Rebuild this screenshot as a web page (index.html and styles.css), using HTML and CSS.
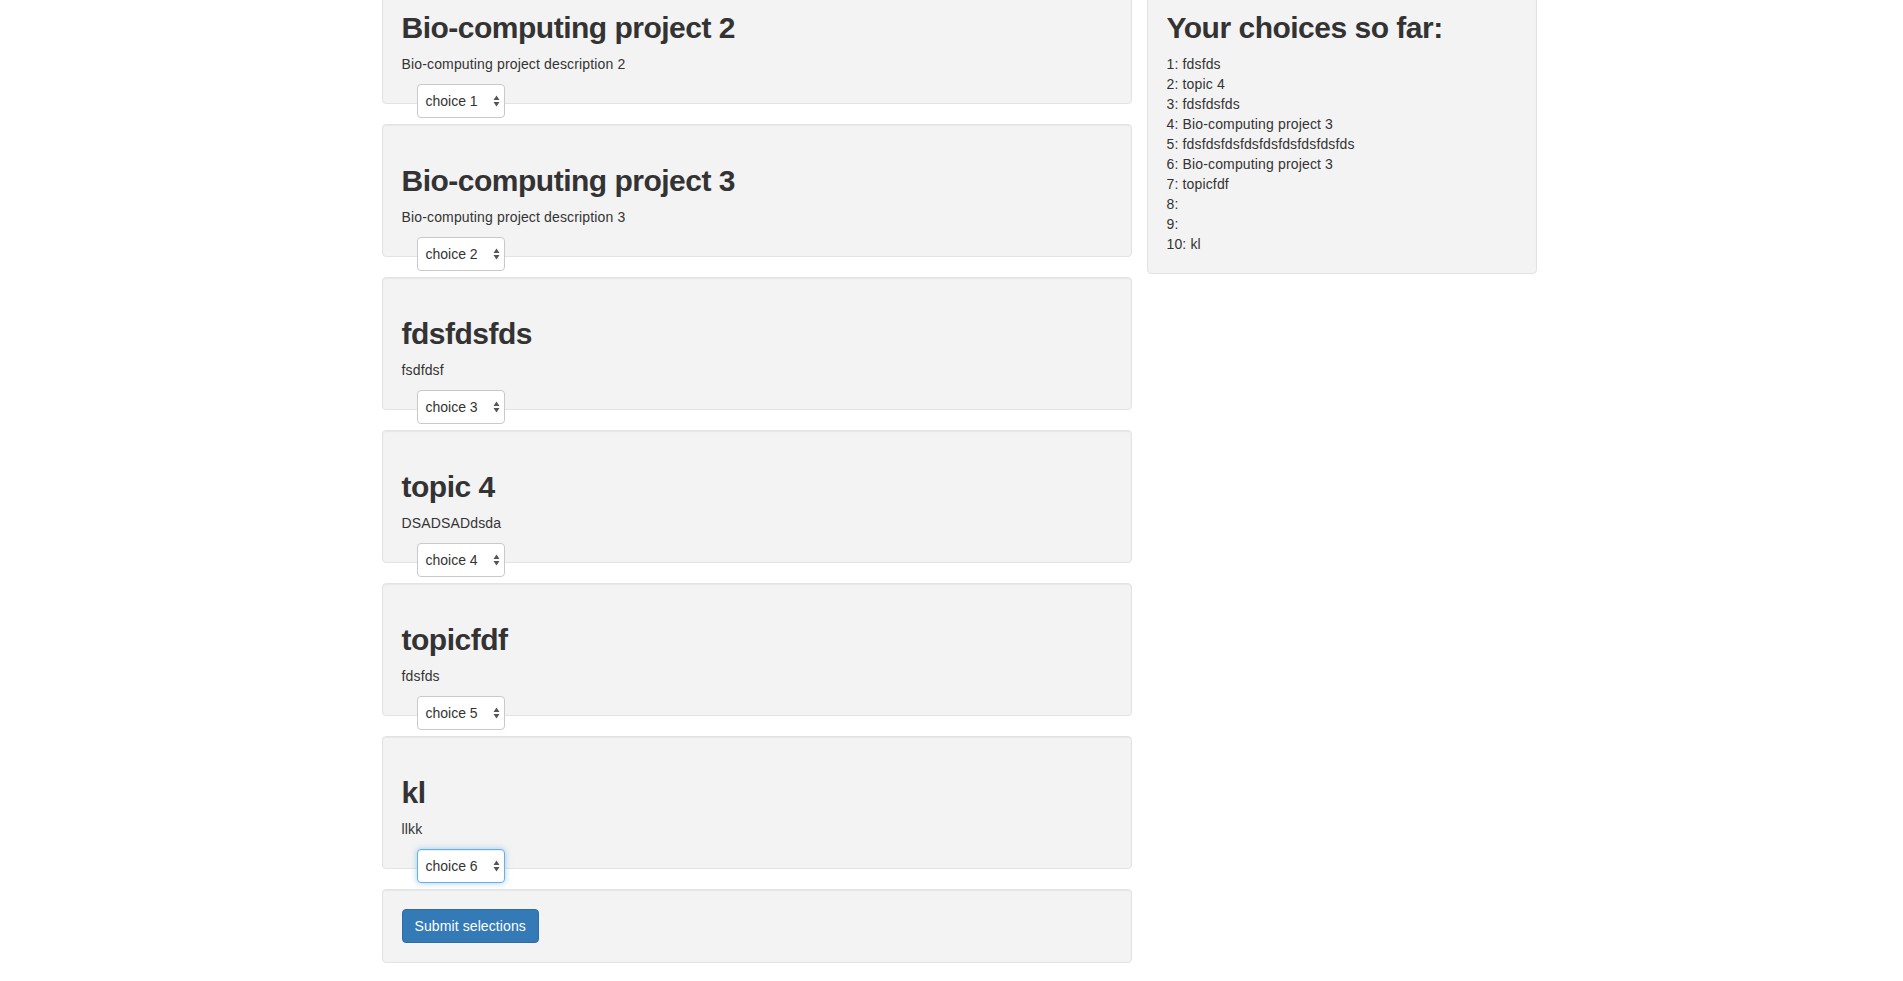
FILE: index.html
```html
<!DOCTYPE html>
<html lang="en">
<head>
<meta charset="utf-8">
<title>Topic choices</title>
<link rel="stylesheet" href="styles.css">
</head>
<body>
<div class="container">
  <main class="topics">
    <section class="well topic">
      <h2 class="topic-title">Bio-computing project 2</h2>
      <p class="topic-desc">Bio-computing project description 2</p>
      <div class="choice-row">
        <div class="select"><span>choice 1</span><svg class="arrows" width="7" height="12" viewBox="0 0 7 12"><path d="M0.5 5 L3.5 0.5 L6.5 5 Z M0.5 7 L3.5 11.5 L6.5 7 Z"/></svg></div>
      </div>
    </section>
    <section class="well topic">
      <h2 class="topic-title">Bio-computing project 3</h2>
      <p class="topic-desc">Bio-computing project description 3</p>
      <div class="choice-row">
        <div class="select"><span>choice 2</span><svg class="arrows" width="7" height="12" viewBox="0 0 7 12"><path d="M0.5 5 L3.5 0.5 L6.5 5 Z M0.5 7 L3.5 11.5 L6.5 7 Z"/></svg></div>
      </div>
    </section>
    <section class="well topic">
      <h2 class="topic-title">fdsfdsfds</h2>
      <p class="topic-desc">fsdfdsf</p>
      <div class="choice-row">
        <div class="select"><span>choice 3</span><svg class="arrows" width="7" height="12" viewBox="0 0 7 12"><path d="M0.5 5 L3.5 0.5 L6.5 5 Z M0.5 7 L3.5 11.5 L6.5 7 Z"/></svg></div>
      </div>
    </section>
    <section class="well topic">
      <h2 class="topic-title">topic 4</h2>
      <p class="topic-desc">DSADSADdsda</p>
      <div class="choice-row">
        <div class="select"><span>choice 4</span><svg class="arrows" width="7" height="12" viewBox="0 0 7 12"><path d="M0.5 5 L3.5 0.5 L6.5 5 Z M0.5 7 L3.5 11.5 L6.5 7 Z"/></svg></div>
      </div>
    </section>
    <section class="well topic">
      <h2 class="topic-title">topicfdf</h2>
      <p class="topic-desc">fdsfds</p>
      <div class="choice-row">
        <div class="select"><span>choice 5</span><svg class="arrows" width="7" height="12" viewBox="0 0 7 12"><path d="M0.5 5 L3.5 0.5 L6.5 5 Z M0.5 7 L3.5 11.5 L6.5 7 Z"/></svg></div>
      </div>
    </section>
    <section class="well topic">
      <h2 class="topic-title">kl</h2>
      <p class="topic-desc">llkk</p>
      <div class="choice-row">
        <div class="select focused"><span>choice 6</span><svg class="arrows" width="7" height="12" viewBox="0 0 7 12"><path d="M0.5 5 L3.5 0.5 L6.5 5 Z M0.5 7 L3.5 11.5 L6.5 7 Z"/></svg></div>
      </div>
    </section>
    <section class="well submit-well">
      <button class="btn-primary" type="button">Submit selections</button>
    </section>
  </main>
  <aside class="well summary">
    <h2 class="topic-title">Your choices so far:</h2>
    <ul class="choice-list">
      <li>1: fdsfds</li>
      <li>2: topic 4</li>
      <li>3: fdsfdsfds</li>
      <li>4: Bio-computing project 3</li>
      <li>5: fdsfdsfdsfdsfdsfdsfdsfdsfds</li>
      <li>6: Bio-computing project 3</li>
      <li>7: topicfdf</li>
      <li>8: </li>
      <li>9: </li>
      <li>10: kl</li>
    </ul>
  </aside>
</div>
</body>
</html>
```

FILE: styles.css
```css
html {
  overflow: hidden;
}

body {
  margin: 0;
  background: #fff;
  color: #333;
  font-family: "Liberation Sans", Arial, Helvetica, sans-serif;
  font-size: 14px;
  line-height: 20px;
  letter-spacing: 0.15px;
}

.container {
  width: 1170px;
  margin: -29px auto 0;
  padding-left: 15px;
  box-sizing: border-box;
  display: flex;
  align-items: flex-start;
  gap: 15px;
}

.topics {
  width: 750px;
  flex: none;
  display: flex;
  flex-direction: column;
  gap: 20px;
}

.well {
  box-sizing: border-box;
  background: #f3f3f3;
  border: 1px solid #e3e3e3;
  border-radius: 4px;
  box-shadow: inset 0 1px 1px rgba(0, 0, 0, 0.05);
  padding: 19px;
}

.summary {
  width: 390px;
  flex: none;
}

.topic-title {
  margin: 20px 0 10px;
  font-size: 30px;
  line-height: 33px;
  font-weight: 700;
  letter-spacing: -0.5px;
  color: #333;
}

.topic-desc {
  margin: 0 0 10px;
}

.choice-row {
  display: flex;
  height: 0;
  padding-left: 15px;
}

.select {
  box-sizing: border-box;
  flex: none;
  width: 88px;
  height: 34px;
  background: #fff;
  border: 1px solid #c9c9c9;
  border-radius: 4px;
  display: flex;
  align-items: center;
  justify-content: space-between;
  padding: 0 4px 0 8px;
  color: #333;
  font-size: 14px;
  letter-spacing: 0;
}

.select.focused {
  border-color: #66afe9;
  box-shadow: inset 0 1px 1px rgba(0, 0, 0, 0.075), 0 0 6px rgba(102, 175, 233, 0.6);
}

.arrows path {
  fill: #555;
}

.submit-well {
  display: flex;
}

.btn-primary {
  font-family: "Liberation Sans", Arial, Helvetica, sans-serif;
  font-size: 14px;
  line-height: 20px;
  letter-spacing: 0.1px;
  padding: 6px 12px;
  color: #fff;
  background: #337ab7;
  border: 1px solid #2e6da4;
  border-radius: 4px;
  cursor: pointer;
}

.choice-list {
  list-style: none;
  margin: 0;
  padding: 0;
}
```
